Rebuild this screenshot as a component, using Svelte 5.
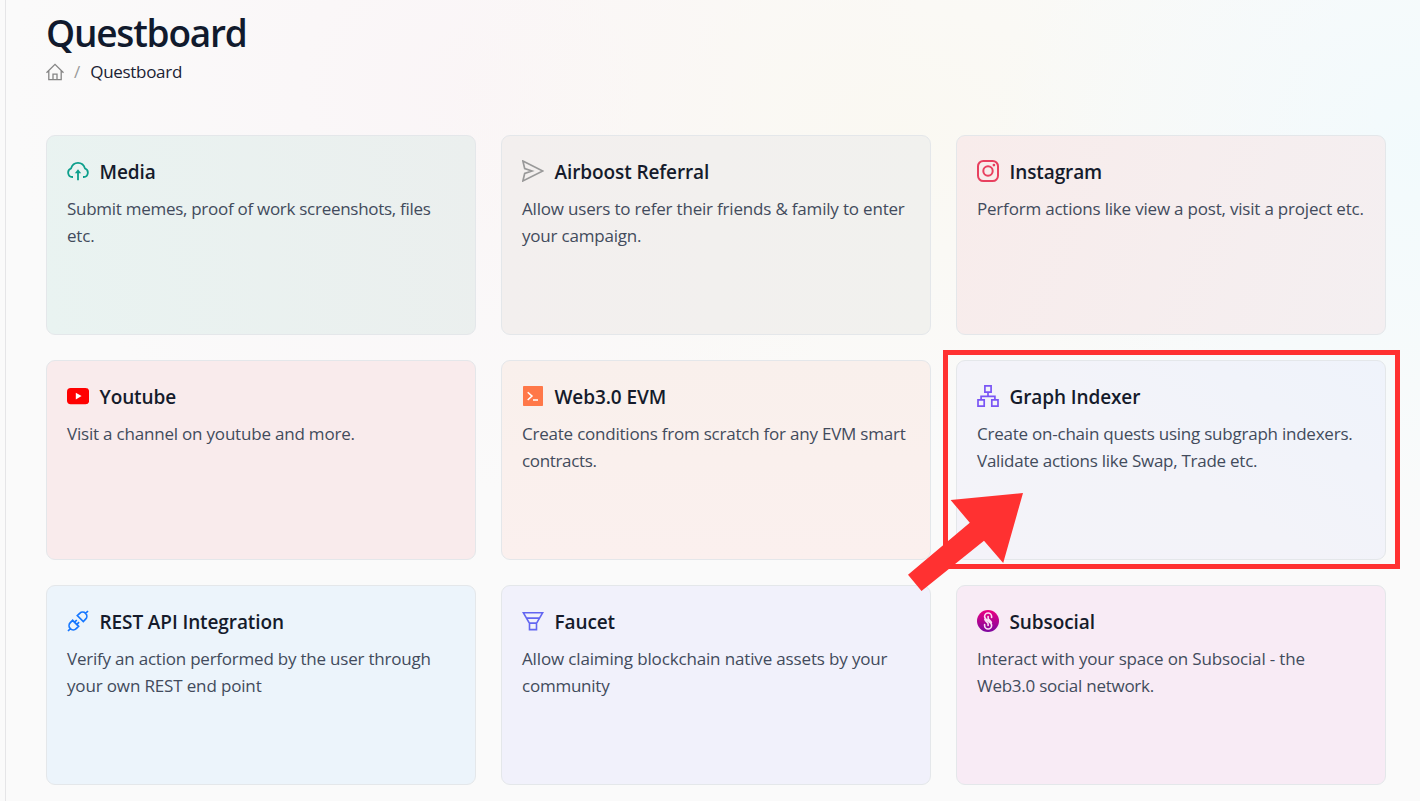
<script>
  // Each description line is [text, letter-spacing in px].
  const cards = [
    { icon: 'cloud', title: 'Media', lines: [['Submit memes, proof of work screenshots, files', -0.28], ['etc.', -0.2]], tone: 'teal' },
    { icon: 'send', title: 'Airboost Referral', lines: [['Allow users to refer their friends & family to enter', -0.19], ['your campaign.', -0.2]], tone: 'stone' },
    { icon: 'instagram', title: 'Instagram', lines: [['Perform actions like view a post, visit a project etc.', -0.2]], tone: 'rose' },
    { icon: 'youtube', title: 'Youtube', lines: [['Visit a channel on youtube and more.', -0.2]], tone: 'red' },
    { icon: 'code', title: 'Web3.0 EVM', lines: [['Create conditions from scratch for any EVM smart', -0.22], ['contracts.', -0.34]], tone: 'orange' },
    { icon: 'graph', title: 'Graph Indexer', lines: [['Create on-chain quests using subgraph indexers.', -0.23], ['Validate actions like Swap, Trade etc.', -0.26]], tone: 'violet', marked: true },
    { icon: 'api', title: 'REST API Integration', lines: [['Verify an action performed by the user through', -0.22], ['your own REST end point', -0.15]], tone: 'blue' },
    { icon: 'faucet', title: 'Faucet', lines: [['Allow claiming blockchain native assets by your', -0.15], ['community', -0.24]], tone: 'indigo' },
    { icon: 'subsocial', title: 'Subsocial', lines: [['Interact with your space on Subsocial - the', -0.16], ['Web3.0 social network.', -0.26]], tone: 'pink' }
  ];
</script>

<div class="shell">
  <main>
    <h1>Questboard</h1>
    <nav>
      <svg class="home" viewBox="0 0 18 18" fill="none" stroke="#858585" stroke-width="1.3">
        <path d="M.5 9.8 9 1.3l8.5 8.5M2.8 8v8.6h12.4V8M7 16.4v-5.2h4v5.2" />
      </svg>
      <span class="slash">/</span>
      <span class="crumb">Questboard</span>
    </nav>

    <section class="grid">
      {#each cards as c}
        <article class="card {c.tone}">
          <header>
            <svg class="icon" viewBox="0 0 22 22" fill="none">
              {#if c.icon === 'cloud'}
                <g stroke="#0d9f8c" stroke-width="1.8">
                  <path d="M6 17H5.3A4.4 4.4 0 0 1 4 8.5C5.1 5 7.7 2.9 11 2.9s5.9 2.1 7 5.6a4.4 4.4 0 0 1-1.3 8.5H16" />
                  <path d="M11 20.2v-9" />
                </g>
                <path d="m11 9.2 3.2 4H7.8z" fill="#0d9f8c" />
              {:else if c.icon === 'send'}
                <path d="M.9 1.1 20.8 11 .9 20.9l1.8-7.4L10 11 2.7 8.5z" stroke="#999" stroke-width="1.7" />
              {:else if c.icon === 'instagram'}
                <g stroke="#e8405f" stroke-width="2">
                  <rect x="1" y="1" width="20" height="20" rx="5.3" />
                  <circle cx="11" cy="11" r="4.7" />
                </g>
                <circle cx="16.9" cy="5.1" r="1.35" fill="#e8405f" />
              {:else if c.icon === 'youtube'}
                <rect y="3" width="22.2" height="16.2" rx="3.7" fill="#f00" />
                <path d="m8.8 7.8 5.8 3.3-5.8 3.3z" fill="#fff" />
              {:else if c.icon === 'code'}
                <rect x="1" y="1" width="20" height="20" rx=".8" fill="#ff7849" />
                <path d="m5.7 7.2 4.3 3.9-4.3 3.9M11 14.9h5" stroke="#fff" stroke-width="1.5" />
              {:else if c.icon === 'graph'}
                <g stroke="#7a55f5" stroke-width="1.7">
                  <path d="M7.9.9h6.2v6.2H7.9zM1 14.9h6.2v6.2H1zM14.8 14.9H21v6.2h-6.2zM11 7.1v4.2M4.1 14.9v-3.6h13.8v3.6" />
                </g>
              {:else if c.icon === 'api'}
                <g stroke="#1677ff" stroke-width="1.7">
                  <path d="m10.3 5.6 2.4-2.3a4.1 4.1 0 0 1 5.9 5.9l-2.3 2.4zM5.6 10.3l-2.3 2.4a4.1 4.1 0 0 0 5.9 5.9l2.4-2.3zM18.3 3.7 21 1M3.7 18.3 1 21M7.6 12.2l2.2-2.2M9.9 14.4l2.2-2.2" />
                </g>
              {:else if c.icon === 'faucet'}
                <path d="M1.3 2.7h19.4l-6.1 10.4H7.4zM4.4 8.1h13.2M7.5 13.1h7v6.5h-7z" stroke="#6366f1" stroke-width="1.6" />
              {:else}
                <defs>
                  <linearGradient id="sub" x1="0" y1="0" x2="0" y2="1">
                    <stop stop-color="#eb0080" /><stop offset="1" stop-color="#7d08a0" />
                  </linearGradient>
                </defs>
                <circle cx="11" cy="11" r="11" fill="url(#sub)" />
                <path d="M14.6 7.4V6.5a3.5 3.5 0 0 0-7 0c0 4 7 4.6 7 9a3.5 3.5 0 0 1-7 0v-.9M11.1 6.6v1.6c0 1.6 3.3 2.3 3.3 4.6M11.1 15.5v-1.8c0-1.4-2.9-2-3.3-4.5" stroke="#fbe3f5" stroke-width="1.6" stroke-linecap="round" />
              {/if}
            </svg>
            <h2>{c.title}</h2>
          </header>
          <p>{#each c.lines as [text, tracking]}<span style="letter-spacing: {tracking}px">{text}</span>{/each}</p>
          {#if c.marked}
            <div class="frame"></div>
            <svg class="arrow" viewBox="0 0 116 98">
              <path d="M115 0 95.2 70 76 47.7 13.5 98 0 81.8 61.8 29.7 42.6 7z" fill="#ff3131" />
            </svg>
          {/if}
        </article>
      {/each}
    </section>
  </main>
</div>

<style>
  :global(body) { margin: 0; overflow: hidden; }
  .shell {
    box-sizing: border-box;
    height: 801px;
    padding-left: 5px;
    overflow: hidden;
    font-family: "Open Sans", "Noto Sans", sans-serif;
    background:
      radial-gradient(ellipse 430px 380px at 1420px 150px, rgba(240, 250, 253, .8), transparent),
      radial-gradient(ellipse 480px 330px at 900px 130px, rgba(250, 248, 240, .8), transparent),
      radial-gradient(ellipse 460px 400px at 470px 90px, rgba(250, 244, 246, .8), transparent),
      #fafafa;
  }
  main {
    box-sizing: border-box;
    height: 801px;
    border-left: 1px solid #e5e5e7;
    padding: 8px 34px 0 40px;
  }
  h1 {
    margin: 0;
    height: 50px;
    line-height: 50px;
    font-size: 37px;
    font-weight: 600;
    letter-spacing: -1.2px;
    color: #111a2d;
  }
  nav {
    display: flex;
    align-items: center;
    height: 27px;
    font-size: 17px;
    color: #1a2233;
  }
  .home { width: 18px; height: 18px; }
  .slash { margin: 0 10px; color: #999; }
  .crumb { letter-spacing: -.3px; }
  .grid {
    display: grid;
    grid-template-columns: repeat(3, 430px);
    grid-auto-rows: 200px;
    gap: 25px;
    margin-top: 50px;
  }
  .card {
    position: relative;
    box-sizing: border-box;
    border: 1px solid #e4e7ea;
    border-radius: 9px;
    padding: 19px 20px 20px;
  }
  header { display: flex; align-items: center; gap: 10.5px; height: 32px; }
  .icon { width: 22px; height: 22px; flex: none; }
  h2 {
    margin: 0;
    padding-top: 2px;
    font-size: 19px;
    line-height: 31px;
    font-weight: 600;
    letter-spacing: -.1px;
    color: #151b2b;
    white-space: nowrap;
  }
  p { margin: 8px 0 0; font-size: 17px; line-height: 27px; color: #424b5c; }
  p span { display: block; white-space: nowrap; }
  .teal { background: linear-gradient(80deg, #e9f3f1, #ebefee); }
  .stone { background: linear-gradient(90deg, #f3efee, #f1f1ee); }
  .rose { background: linear-gradient(110deg, #f8eceb, #f4eff1); }
  .red { background: #f9ebec; }
  .orange { background: linear-gradient(#f9f0ec, #fbf0ee); }
  .violet { background: linear-gradient(35deg, #f4f3f9, #f3f3f9 50%, #eff3fb); }
  .blue { background: #ecf4fb; }
  .indigo { background: #f1f1fb; }
  .pink { background: #f8ebf5; }
  .frame {
    position: absolute;
    left: -14px;
    top: -11px;
    width: 447px;
    height: 209px;
    border: 5px solid #ff3131;
  }
  .arrow { position: absolute; left: -49px; top: 132px; width: 116px; height: 98px; z-index: 2; }
  .card:has(.frame) { z-index: 2; }
</style>
